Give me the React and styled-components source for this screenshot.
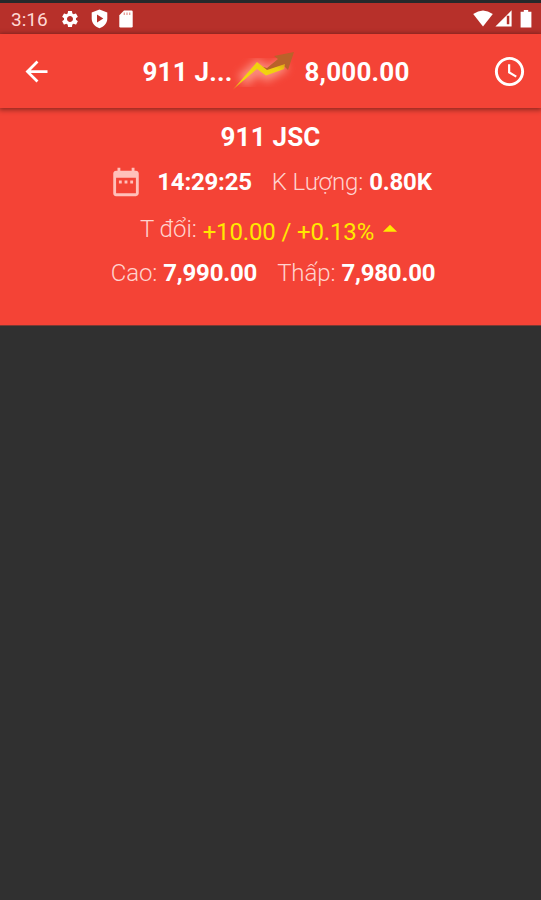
import React from "react";
import styled, { createGlobalStyle } from "styled-components";
import {
  MdAccessTime,
  MdArrowBack,
  MdArrowDropUp,
  MdDateRange,
  MdSettings,
} from "react-icons/md";

const StatusBar = () => (
  <StyledStatusBar>
    <Clock>3:16</Clock>
    <StatusIcons>
      <MdSettings size={20} />
      <svg width="17" height="20" viewBox="0 0 17 20">
        <path
          fill="currentColor"
          fillRule="evenodd"
          d="M8.5 0.5 16.3 3.5V9.5C16.3 14 13 17.7 8.5 19.2 4 17.7 .7 14 .7 9.5V3.5ZM6 5.6V13.4L12.3 9.5Z"
        />
      </svg>
      <svg width="14" height="18" viewBox="0 0 14 18">
        <path
          fill="currentColor"
          d="M5 .5H12.5Q13.7.5 13.7 1.8V16.2Q13.7 17.5 12.5 17.5H1.5Q.3 17.5.3 16.2V5.2Z"
        />
        <path stroke="#e59a93" strokeWidth="1.3" d="M5.3 2.5V5M8 2.5V5M10.7 2.5V5" />
      </svg>
    </StatusIcons>
    <Signals>
      <svg width="20" height="17" viewBox="0 0 20 17">
        <path fill="currentColor" d="M.2 4Q10-3 19.8 4L10 16.6Z" />
      </svg>
      <svg width="17" height="17" viewBox="0 0 17 17">
        <path fill="currentColor" fillRule="evenodd" d="M16.6.3V16.6H.4ZM14.3 5.8H11.8V14.3H14.3Z" />
      </svg>
      <svg width="12" height="18" viewBox="0 0 12 18">
        <path fill="currentColor" d="M3.8 0H8.2V1.8H11.4V17.5H.6V1.8H3.8Z" />
      </svg>
    </Signals>
  </StyledStatusBar>
);

const TrendArrow = () => (
  <StyledTrend width="74" height="56" viewBox="0 0 74 56">
    <defs>
      <filter id="glow" x="-30%" y="-30%" width="160%" height="160%">
        <feGaussianBlur stdDeviation="4" />
      </filter>
      <linearGradient id="gold" x1="0" y1="1" x2="1" y2="0">
        <stop offset="0" stopColor="#e8a21c" />
        <stop offset=".3" stopColor="#f3d80c" />
        <stop offset=".8" stopColor="#f0cf10" />
        <stop offset="1" stopColor="#dd9a18" />
      </linearGradient>
    </defs>
    <path
      d="M16 38 32 24 41 31 59 21"
      fill="none"
      stroke="#ffb5a5"
      strokeWidth="13"
      opacity=".65"
      filter="url(#glow)"
    />
    <path fill="#b9622a" d="M34 23 41 25 52 16 48 13 68 9 62 27 58 23 42 31Z" />
    <path fill="url(#gold)" d="M7 46.5 31 19 41 27 59 21 58 26 40 32.5 31 26Z" />
  </StyledTrend>
);

const App = () => (
  <Screen>
    <GlobalStyle />
    <StatusBar />
    <AppBar>
      <MdArrowBack size={33} />
      <Title>
        <Strong>911 J...</Strong>
        <TrendArrow />
        <Strong>8,000.00</Strong>
      </Title>
      <MdAccessTime size={35} />
    </AppBar>
    <Panel>
      <Row $height={38}>
        <Strong>911 JSC</Strong>
      </Row>
      <Row $height={54}>
        <CalendarIcon size={34} />
        <Value $gap={14}>14:29:25</Value>
        <Label $gap={20}>K Lượng:</Label>
        <Value $gap={6}>0.80K</Value>
      </Row>
      <Row $height={40} $indent={6}>
        <Label>T đổi:</Label>
        <Change>+10.00 / +0.13%</Change>
        <UpIcon size={34} />
      </Row>
      <Row $height={48} $indent={5}>
        <Label>Cao:</Label>
        <Value $gap={6}>7,990.00</Value>
        <Label $gap={20}>Thấp:</Label>
        <Value $gap={6}>7,980.00</Value>
      </Row>
    </Panel>
  </Screen>
);

const GlobalStyle = createGlobalStyle`
  body {
    margin: 0;
    background: #303030;
  }
`;

const Screen = styled.div`
  box-sizing: border-box;
  height: 900px;
  border-top: 3px solid #26292b;
  background: #303030;
  color: white;
  font-family: Roboto, sans-serif;
  overflow: hidden;

  svg {
    flex: none;
    display: block;
  }
`;

const StyledStatusBar = styled.div`
  box-sizing: border-box;
  height: 31px;
  padding: 0 9px 0 11px;
  display: flex;
  align-items: center;
  background: #b7302a;
`;

const Clock = styled.div`
  width: 49px;
  font-size: 19px;
  color: #ffd9d5;
  padding-top: 2px;
`;

const StatusIcons = styled.div`
  display: flex;
  align-items: center;
  gap: 11px;
`;

const Signals = styled.div`
  margin-left: auto;
  display: flex;
  align-items: center;
  gap: 8px;

  svg:first-child {
    margin-right: -6px;
  }
`;

const AppBar = styled.div`
  box-sizing: border-box;
  position: relative;
  height: 74px;
  padding: 0 14px 0 20px;
  display: flex;
  align-items: center;
  justify-content: space-between;
  background: #f44336;
  box-shadow: 0 1px 5px 1px rgba(0, 0, 0, 0.42);
`;

const Title = styled.div`
  display: flex;
  align-items: center;
  padding-left: 7px;
`;

const Strong = styled.span`
  padding-top: 2px;
  font-size: 26px;
  font-weight: 700;
  letter-spacing: 0.2px;
  line-height: 30px;
  white-space: nowrap;
`;

const StyledTrend = styled.svg`
  margin: 0 4px 0 -6px;
`;

const Panel = styled.div`
  box-sizing: border-box;
  height: 218px;
  padding-top: 9px;
  background: #f44336;
  border-bottom: 1px solid #7a3933;
`;

const Row = styled.div`
  box-sizing: border-box;
  height: ${(props) => props.$height}px;
  padding-left: ${(props) => props.$indent || 0}px;
  display: flex;
  align-items: center;
  justify-content: center;
`;

const Label = styled.span`
  margin-left: ${(props) => props.$gap || 0}px;
  font-size: 24px;
  font-weight: 300;
  letter-spacing: -0.1px;
  line-height: 28px;
  color: #ffd3cf;
  white-space: nowrap;
`;

const Value = styled.span`
  margin-left: ${(props) => props.$gap || 0}px;
  font-size: 24px;
  font-weight: 700;
  letter-spacing: -0.2px;
  line-height: 28px;
  white-space: nowrap;
`;

const CalendarIcon = styled(MdDateRange)`
  color: #ffc0ba;
`;

const Change = styled.span`
  margin: 6px 0 0 6px;
  font-size: 24px;
  letter-spacing: -0.15px;
  line-height: 28px;
  color: #ffe800;
  white-space: nowrap;
`;

const UpIcon = styled(MdArrowDropUp)`
  margin-left: -1px;
  color: #ffe800;
`;

export default App;
